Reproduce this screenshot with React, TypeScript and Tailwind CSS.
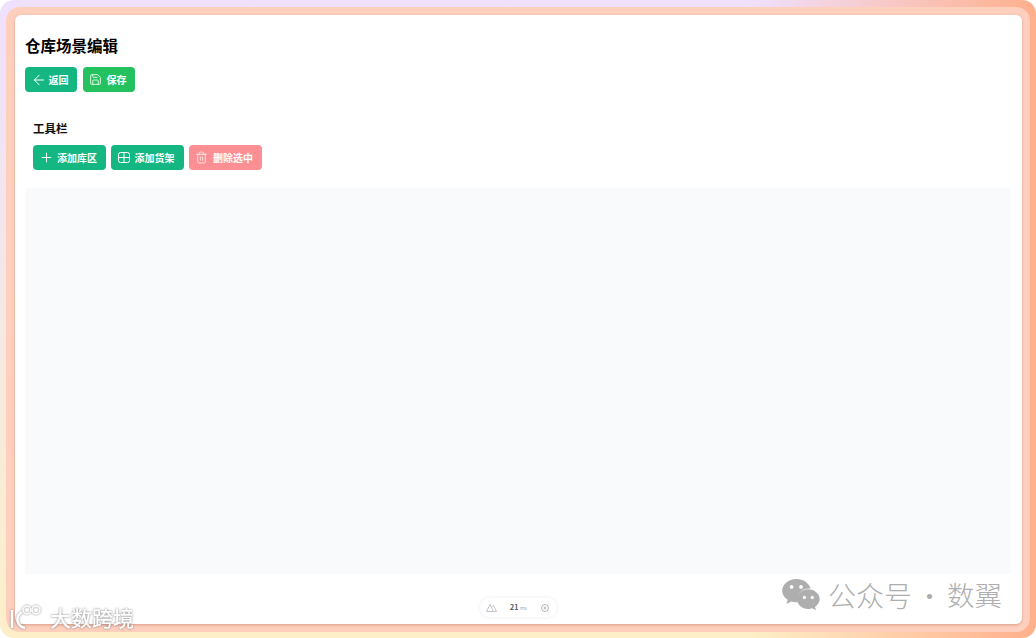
import { ArrowLeft, Plus, Save, Trash2 } from "lucide-react";
import type { ReactNode } from "react";

type ToolButtonProps = {
  icon: ReactNode;
  label: string;
  className: string;
};

function ToolButton({ icon, label, className }: ToolButtonProps) {
  return (
    <button
      type="button"
      className={`flex h-[25px] items-center justify-center rounded-[4px] pr-[3px] text-[10px] font-bold text-white ${className}`}
    >
      {icon}
      {label}
    </button>
  );
}

function WeChatMark() {
  return (
    <svg width="38" height="31" viewBox="0 0 40 33" fill="#aeaeae">
      <path d="M15 0C6.8 0 0 5.6 0 12.6c0 4 2.2 7.3 5.8 9.6L4.4 26.6l5.1-2.6c1.8.4 3.4.8 5.5.8h1.5c-.3-1-.5-2-.5-3 0-6.5 5.6-11.7 12.7-11.7h1.4C28.7 4.4 22.4 0 15 0z" />
      <circle cx="10" cy="8.4" r="2" fill="#fff" />
      <circle cx="20" cy="8.4" r="2" fill="#fff" />
      <path d="M40 21.4c0-5.8-5.8-10.6-12.2-10.6-6.8 0-12.2 4.8-12.2 10.6S21 32 27.8 32c1.4 0 2.9-.4 4.3-.8l3.9 2.2-1.1-3.6C37.8 27.6 40 24.7 40 21.4z" />
      <circle cx="23.6" cy="19.6" r="1.7" fill="#fff" />
      <circle cx="32" cy="19.6" r="1.7" fill="#fff" />
    </svg>
  );
}

export default function App() {
  return (
    <div className="relative h-[638px] w-[1036px] overflow-hidden rounded-[14px] bg-[linear-gradient(90deg,rgba(255,170,130,0)_72%,#ffb08c_100%),linear-gradient(180deg,#efe0ff_0%,#fdf0c8_100%)] pb-[6px] pl-[6px] pr-[6px] pt-[7px] font-['Noto_Sans_CJK_SC','Liberation_Sans',sans-serif]">
      <div className="h-full rounded-[14px] bg-[#ffcfbe] pb-[8px] pl-[9px] pr-[8px] pt-[8px]">
        <div className="relative h-full rounded-[6px] bg-white px-[10px] pt-[18px] shadow-[0_1px_3px_rgba(150,70,40,0.35)]">
          <h1 className="text-[15.5px] font-bold leading-[24px] text-black">仓库场景编辑</h1>

          <div className="mt-[10px] flex gap-[6px]">
            <ToolButton
              icon={<ArrowLeft size={16} strokeWidth={1.5} className="mr-[2px]" />}
              label="返回"
              className="w-[52px] bg-[#14b781]"
            />
            <ToolButton
              icon={<Save size={13} strokeWidth={1.5} className="mr-[5px]" />}
              label="保存"
              className="w-[52px] bg-[#24c25f]"
            />
          </div>

          <div className="px-[8px] pt-[27px]">
            <p className="text-[11.5px] font-bold leading-[18px] text-[#111111]">工具栏</p>
            <div className="mt-[8px] flex gap-[5px]">
              <ToolButton
                icon={<Plus size={15} strokeWidth={1.5} className="mr-[3px]" />}
                label="添加库区"
                className="w-[73px] bg-[#14b781]"
              />
              <ToolButton
                icon={
                  <svg width="12" height="11" viewBox="0 0 12 11" fill="none" stroke="#fff" strokeWidth="1" className="mr-[5px]">
                    <rect x="0.5" y="0.5" width="11" height="10" rx="2" />
                    <path d="M6 0.5 V10.5 M0.5 5.5 H11.5" />
                  </svg>
                }
                label="添加货架"
                className="w-[73px] bg-[#14b781]"
              />
              <ToolButton
                icon={<Trash2 size={13} strokeWidth={1.3} className="mr-[5px]" />}
                label="删除选中"
                className="w-[73px] bg-[#fb8f94]"
              />
            </div>
          </div>

          <div className="mt-[18px] h-[386px] w-[986px] bg-[#f8fafc]" />

          <div className="mx-auto mt-[24px] flex h-[19px] w-[77px] items-center justify-between rounded-full bg-white pl-[6px] pr-[7px] shadow-[0_0_4px_rgba(0,0,0,0.08)]">
            <svg width="11" height="9" viewBox="0 0 11 9" fill="none" stroke="#b4b8bf" strokeWidth="0.8">
              <path d="M0.5 8.5 L4 1.5 L7.5 8.5 Z M6 4 L7.5 2.5 L10.5 8.5 H7.5" />
            </svg>
            <span className="text-[7px] font-bold leading-none text-[#4b5563]">
              21 <span className="text-[5px] font-normal text-[#9ca3af]">ms</span>
            </span>
            <svg width="10" height="10" viewBox="0 0 10 10" fill="none" stroke="#9ca3af" strokeWidth="0.8">
              <circle cx="5" cy="5" r="3.5" />
              <circle cx="5" cy="5" r="1" />
            </svg>
          </div>

          <div className="absolute left-[767px] top-[564px] flex items-center text-[#aeaeae]">
            <WeChatMark />
            <span className="ml-[8px] text-[28px] font-light leading-none">公众号</span>
            <span className="w-[35px] text-center text-[24px] font-normal leading-none">·</span>
            <span className="text-[27.5px] font-light leading-none">数翼</span>
          </div>
        </div>
      </div>

      <div className="absolute left-[9px] top-[603px] flex items-center text-[#fdfdfd] [filter:drop-shadow(0_0_1px_rgba(90,90,90,0.75))]">
        <svg width="36" height="28" viewBox="0 0 36 28" fill="none" stroke="#fff" strokeWidth="2.5">
          <path d="M3 7 V25 M13 9 C6 13 7 23 16 25" />
          <circle cx="18" cy="7" r="4" strokeWidth="1.5" />
          <circle cx="27" cy="7" r="4" strokeWidth="1.5" />
        </svg>
        <span className="ml-[5px] text-[21px] font-medium leading-none">大数跨境</span>
      </div>
    </div>
  );
}
